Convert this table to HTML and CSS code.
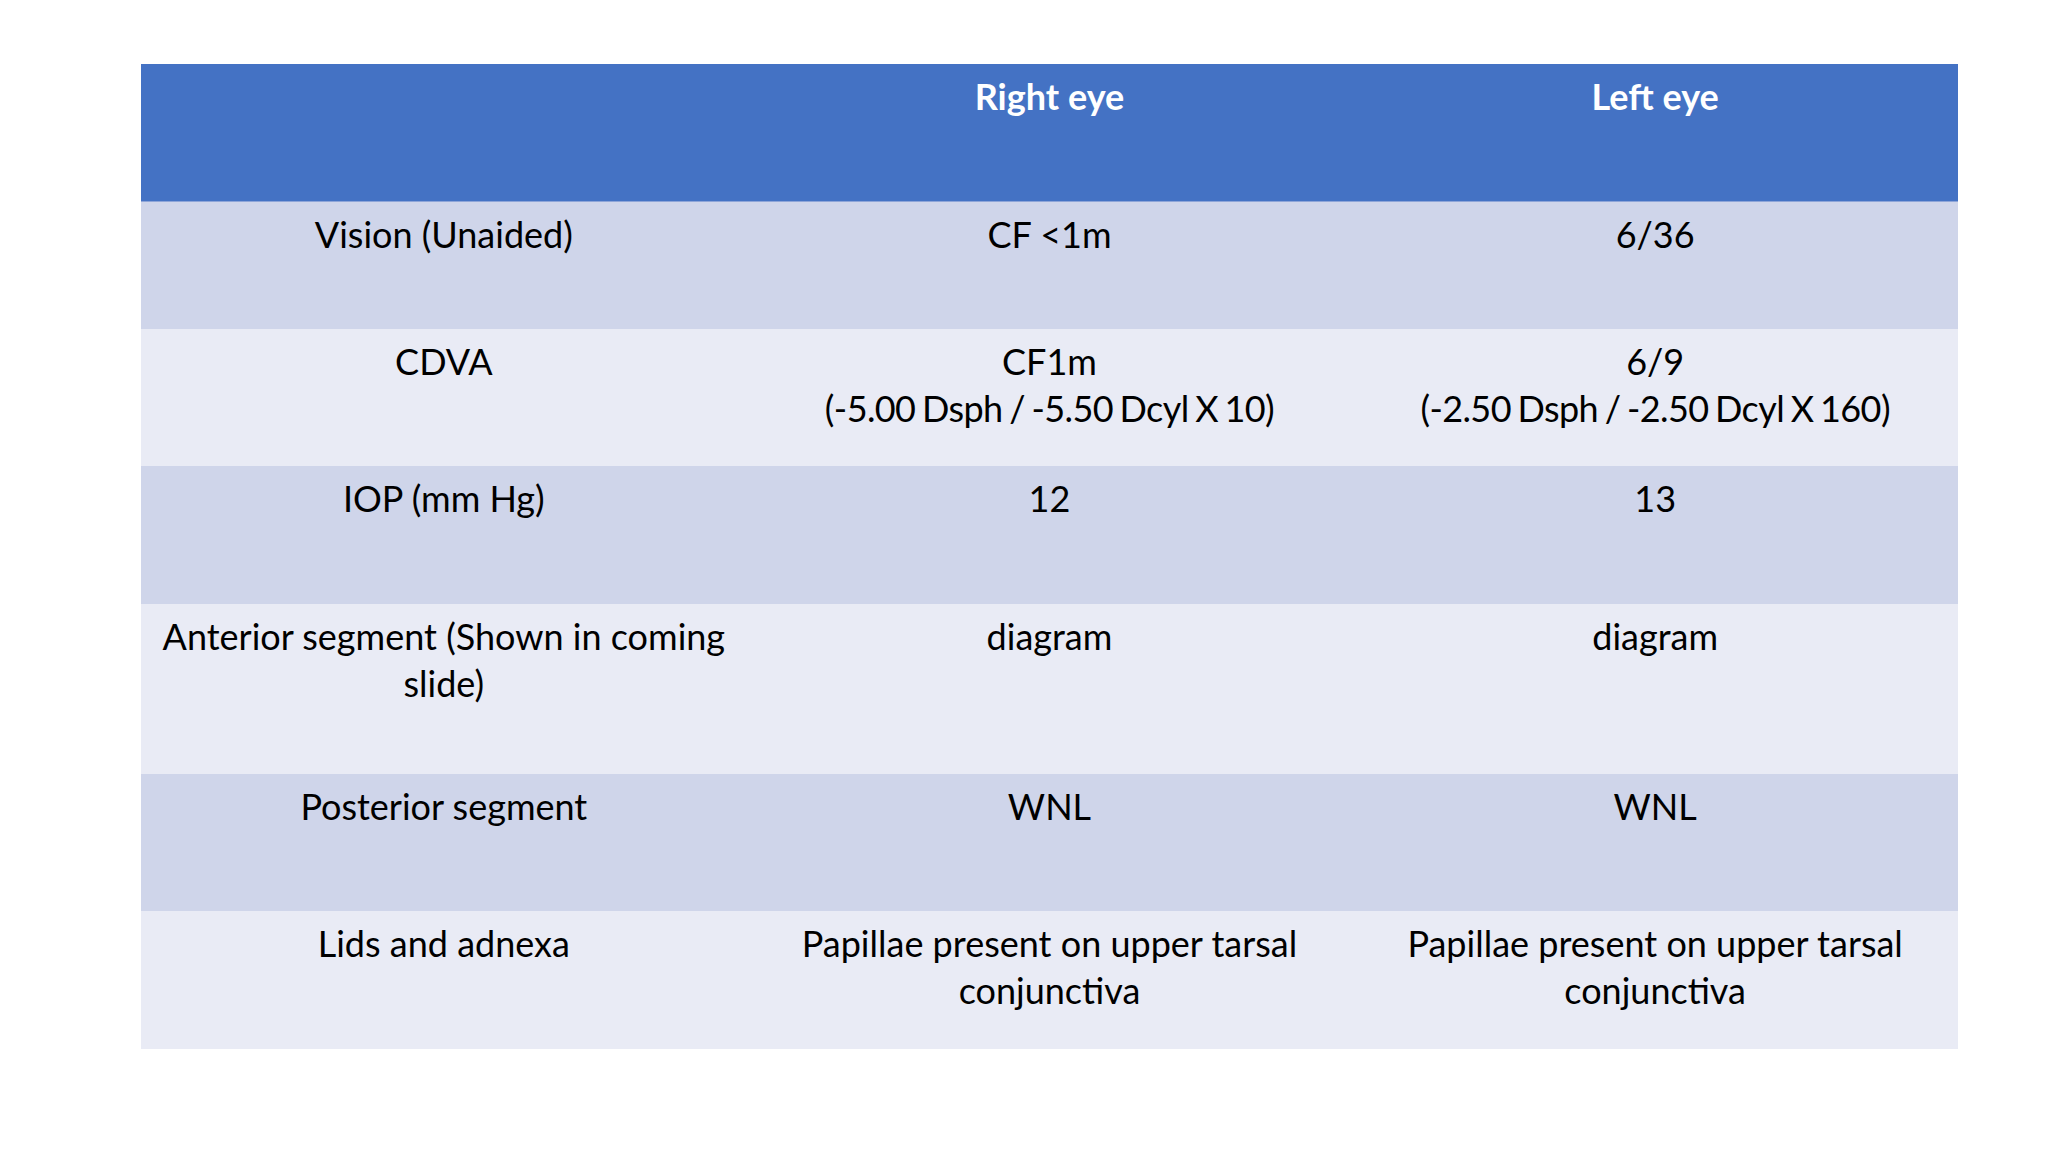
FILE: index.html
```html
<!DOCTYPE html>
<html>
<head>
<meta charset="utf-8">
<link rel="stylesheet" href="styles.css">
</head>
<body>
<div class="slide">
  <table class="exam">
    <thead>
      <tr class="head">
        <th></th>
        <th>Right eye</th>
        <th>Left eye</th>
      </tr>
    </thead>
    <tbody>
      <tr class="odd r1">
        <td>Vision (Unaided)</td>
        <td>CF &lt;1m</td>
        <td>6/36</td>
      </tr>
      <tr class="even r2">
        <td>CDVA</td>
        <td>CF1m<br><span class="rx">(-5.00 Dsph / -5.50 Dcyl X 10)</span></td>
        <td>6/9<br><span class="rx">(-2.50 Dsph / -2.50 Dcyl X 160)</span></td>
      </tr>
      <tr class="odd r3">
        <td>IOP (mm Hg)</td>
        <td>12</td>
        <td>13</td>
      </tr>
      <tr class="even r4">
        <td>Anterior segment (Shown in coming slide)</td>
        <td>diagram</td>
        <td>diagram</td>
      </tr>
      <tr class="odd r5">
        <td>Posterior segment</td>
        <td>WNL</td>
        <td>WNL</td>
      </tr>
      <tr class="even r6">
        <td>Lids and adnexa</td>
        <td>Papillae present on upper tarsal conjunctiva</td>
        <td>Papillae present on upper tarsal conjunctiva</td>
      </tr>
    </tbody>
  </table>
</div>
</body>
</html>
```

FILE: styles.css
```css
html, body {
  margin: 0;
  padding: 0;
  background: #ffffff;
}

.slide {
  width: 2048px;
  height: 1152px;
  padding: 64px 0 0 141px;
  box-sizing: border-box;
  font-family: "Lato", "Open Sans", sans-serif;
}

.exam {
  width: 1817px;
  table-layout: fixed;
  border-collapse: collapse;
  border-spacing: 0;
}

.exam th,
.exam td {
  width: 33.333%;
  vertical-align: top;
  text-align: center;
  padding: 9px 10px 0;
  font-size: 36px;
  line-height: 47px;
  color: #000000;
  box-sizing: border-box;
}

.exam th {
  color: #ffffff;
  font-weight: 700;
}

.rx {
  letter-spacing: -0.6px;
  word-spacing: -2px;
}

.head {
  background: #4472c4;
  height: 137px;
  border-bottom: 1px solid #8ea5d8;
}

.odd { background: #cfd5ea; }
.even { background: #e9ebf5; }

.r1 { height: 128px; }
.r2 { height: 137px; }
.r3 { height: 138px; }
.r4 { height: 170px; }
.r5 { height: 137px; }
.r6 { height: 138px; }
```
